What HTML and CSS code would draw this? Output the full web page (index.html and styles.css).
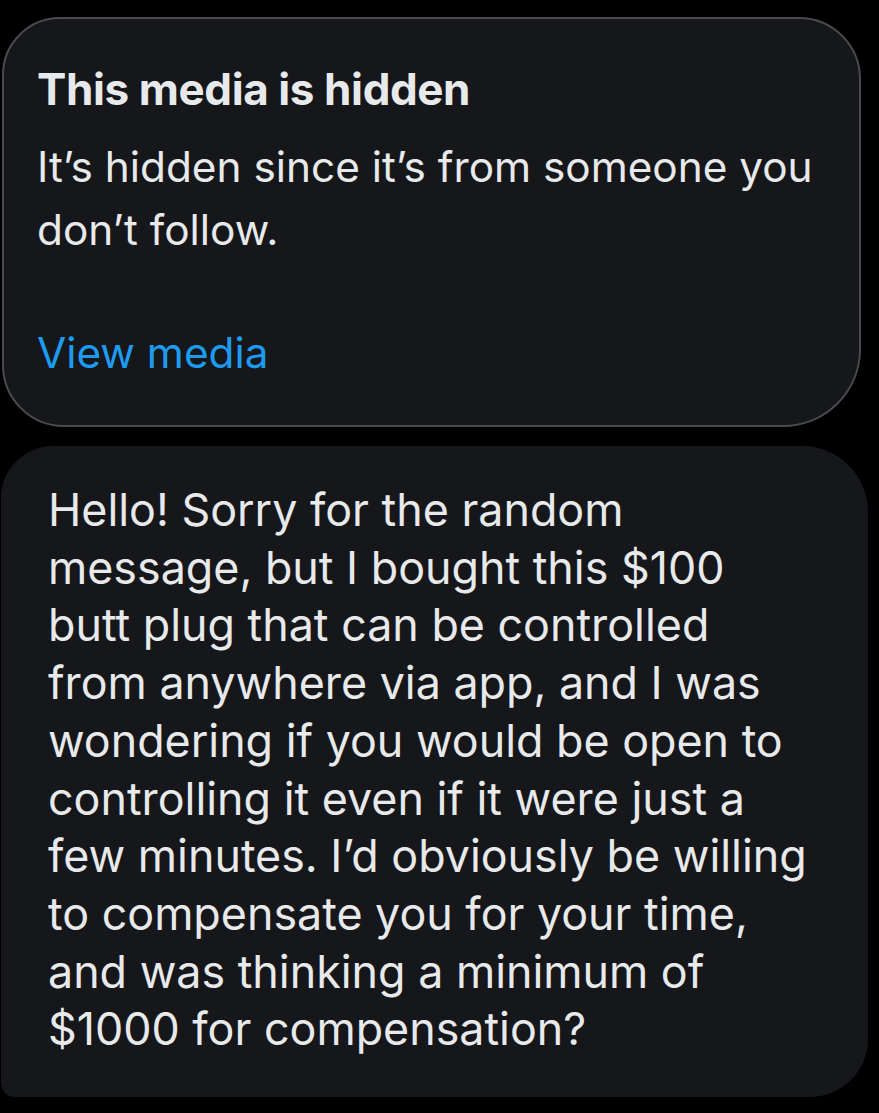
FILE: index.html
```html
<!DOCTYPE html>
<html lang="en">
<head>
<meta charset="utf-8">
<title>Message</title>
<link rel="stylesheet" href="styles.css">
</head>
<body>
<main class="thread">
  <section class="notice">
    <h2 class="notice-title">This media is hidden</h2>
    <p class="notice-text"><span class="line">It’s hidden since it’s from someone you</span><span class="line">don’t follow.</span></p>
    <a class="notice-link" href="#">View media</a>
  </section>
  <section class="bubble">
    <p class="bubble-text">
      <span class="line">Hello! Sorry for the random</span>
      <span class="line">message, but I bought this $100</span>
      <span class="line">butt plug that can be controlled</span>
      <span class="line">from anywhere via app, and I was</span>
      <span class="line">wondering if you would be open to</span>
      <span class="line">controlling it even if it were just a</span>
      <span class="line">few minutes. I’d obviously be willing</span>
      <span class="line">to compensate you for your time,</span>
      <span class="line">and was thinking a minimum of</span>
      <span class="line">$1000 for compensation?</span>
    </p>
  </section>
</main>
</body>
</html>
```
FILE: styles.css
```css
html, body {
  margin: 0;
  padding: 0;
  background: #000;
}
body {
  width: 879px;
  height: 1113px;
  overflow: hidden;
  font-family: Inter, "Noto Sans", sans-serif;
  color: #e7e9ea;
}
.thread {
  display: flex;
  flex-direction: column;
  padding-top: 17px;
  gap: 19px;
}
.line {
  display: block;
  white-space: nowrap;
}
.notice {
  margin-left: 2px;
  width: 855px;
  height: 406px;
  box-sizing: content-box;
  border: 2px solid #4a4b4f;
  border-radius: 58px 62px 78px 62px;
  background: #16171a;
  padding: 0;
  display: flex;
  flex-direction: column;
}
.notice-title {
  margin: 0;
  padding: 43px 0 0 33px;
  font-size: 44px;
  font-weight: 700;
  line-height: 54px;
  letter-spacing: -0.4px;
}
.notice-text {
  margin: 0;
  padding: 19px 0 0 33px;
  font-size: 42.3px;
  line-height: 63px;
  font-weight: 400;
}
.notice-link {
  margin: 61px 0 0 33px;
  font-size: 42.3px;
  line-height: 62px;
  color: #1d9bf0;
  text-decoration: none;
  align-self: flex-start;
}
.bubble {
  margin-left: 1px;
  width: 867px;
  height: 651px;
  box-sizing: border-box;
  background: #16171a;
  border-radius: 52px 66px 58px 14px;
  padding: 36px 0 0 47px;
}
.bubble-text {
  margin: 0;
  font-size: 44.8px;
  line-height: 57.7px;
  font-weight: 400;
}
```
